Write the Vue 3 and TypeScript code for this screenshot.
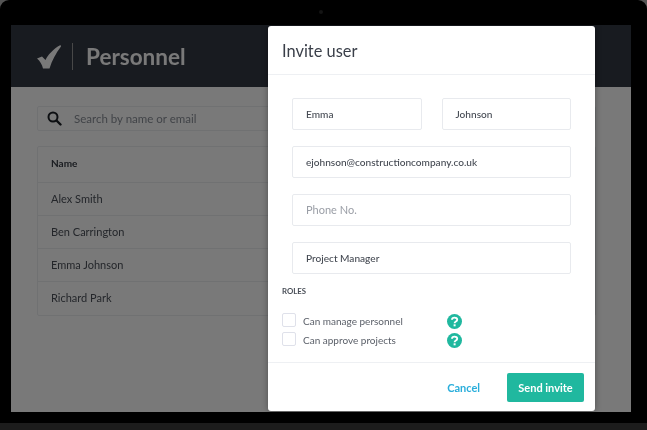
<script setup lang="ts">
const people: string[] = ['Alex Smith', 'Ben Carrington', 'Emma Johnson', 'Richard Park']
const roles: string[] = ['Can manage personnel', 'Can approve projects']
</script>

<template>
  <div class="device">
    <span class="camera"></span>
    <div class="screen">
      <header class="topbar">
        <svg class="logo" width="24" height="24" viewBox="0 0 24 24"><path d="M0 13.500 L5 11.500 L8.500 15 C11 10 16 4 23.500 0 L24 1.500 C19 8 15 15.500 12.500 23.500 L6 23.500 C5 19.500 3 16 0 13.500 Z" fill="#fff"/></svg>
        <span class="divider"></span>
        <span class="title">Personnel</span>
      </header>
      <main class="page">
        <div class="search">
          <svg width="15" height="15" viewBox="0 0 15 15" fill="none" stroke="#1c2026" stroke-width="2"><circle cx="6" cy="6" r="4.500"/><path d="M9.500 9.500 L13.500 13.500" stroke-linecap="round" stroke-width="2.400"/></svg>
          <span>Search by name or email</span>
        </div>
        <div class="table">
          <div class="thead">Name</div>
          <div v-for="p in people" :key="p" class="row">{{ p }}</div>
        </div>
      </main>
      <div class="scrim"></div>
      <section class="modal">
        <h2 class="modal-title">Invite user</h2>
        <div class="modal-body">
          <div class="fields">
            <div class="pair">
              <div class="field">Emma</div>
              <div class="field">Johnson</div>
            </div>
            <div class="field">ejohnson@constructioncompany.co.uk</div>
            <div class="field placeholder">Phone No.</div>
            <div class="field">Project Manager</div>
          </div>
          <div class="roles-label">ROLES</div>
          <div class="roles">
            <div v-for="r in roles" :key="r" class="role">
              <span class="check"></span>
              <span class="role-name">{{ r }}</span>
              <svg class="help" width="15" height="15" viewBox="0 0 15 15"><circle cx="7.500" cy="7.500" r="7.500" fill="#20b89f"/><path d="M5 5.800 C5 2.900 10.200 2.900 10.200 5.700 C10.200 7.600 7.600 7.500 7.600 9.200" fill="none" stroke="#fff" stroke-width="1.900"/><rect x="6.600" y="10.300" width="2" height="2" fill="#fff"/></svg>
            </div>
          </div>
        </div>
        <footer class="modal-foot">
          <span class="cancel">Cancel</span>
          <span class="send">Send invite</span>
        </footer>
      </section>
    </div>
    <div class="base"></div>
  </div>
</template>

<style>
html, body { margin: 0; background: #555; }
</style>

<style scoped>
.device {
  position: relative;
  width: 647px;
  height: 430px;
  background: #000;
  border-radius: 9px 9px 0 0;
  padding-top: 25px;
  box-sizing: border-box;
  overflow: hidden;
  display: flex;
  flex-direction: column;
  font-family: Lato, "Open Sans", sans-serif;
  filter: blur(0.45px);
}
.camera {
  position: absolute;
  left: 319px;
  top: 10px;
  width: 4px;
  height: 4px;
  border-radius: 50%;
  background: #141414;
}
.screen {
  position: relative;
  margin-left: 11px;
  width: 620px;
  height: 387px;
  flex: none;
  background: #fff;
  overflow: hidden;
}
.base { margin-top: 11px; flex: 1; background: #1c1c1c; }
.topbar {
  height: 62px;
  background: #343a45;
  display: flex;
  align-items: center;
  padding-left: 26px;
  box-sizing: border-box;
}
.logo { flex: none; margin-top: 2px; }
.divider { width: 1px; height: 27px; background: #999; margin: 0 13px 0 11px; }
.title { font-size: 22.500px; font-weight: 700; color: #fff; }
.page { padding: 19px 35px 0 26px; }
.search {
  height: 25px;
  border: 1px solid #eceef1;
  border-radius: 2px;
  box-sizing: border-box;
  display: flex;
  align-items: center;
  gap: 12px;
  padding-left: 9px;
  font-size: 11.500px;
  color: #8a8f98;
}
.table { margin-top: 15px; border: 1px solid #eceef1; border-radius: 2px; }
.thead {
  height: 36px;
  box-sizing: border-box;
  display: flex;
  align-items: center;
  padding: 0 0 3px 13px;
  font-size: 10px;
  font-weight: 700;
  color: #3b4049;
  border-bottom: 1px solid #eceef1;
}
.row {
  height: 33px;
  box-sizing: border-box;
  display: flex;
  align-items: center;
  padding: 0 0 2px 13px;
  font-size: 11px;
  color: #4c515a;
  border-bottom: 1px solid #eceef1;
}
.row:last-child { border-bottom: 0; }
.scrim { position: absolute; inset: 0; background: rgba(0, 0, 0, 0.525); }
.modal {
  position: absolute;
  left: 257px;
  top: 1px;
  width: 327px;
  height: 385px;
  background: #fff;
  border-radius: 3px;
  box-shadow: 0 0 6px rgba(0, 0, 0, 0.35);
  display: flex;
  flex-direction: column;
}
.modal-title {
  margin: 0;
  height: 49px;
  flex: none;
  box-sizing: border-box;
  border-bottom: 1px solid #eef0f3;
  padding: 15px 0 0 14px;
  font-size: 16.400px;
  line-height: 20px;
  font-weight: 400;
  color: #3a3f49;
}
.modal-body { flex: 1; padding: 23px 24px 0 14px; }
.fields { display: flex; flex-direction: column; gap: 16px; padding-left: 10px; }
.pair { display: flex; gap: 20px; }
.pair .field { flex: 1; }
.field {
  height: 32px;
  box-sizing: border-box;
  border: 1px solid #e8eaee;
  border-radius: 2px;
  padding: 0 0 1px 13px;
  display: flex;
  align-items: center;
  font-size: 10.100px;
  font-weight: 500;
  color: #444952;
}
.placeholder { color: #9a9ea6; font-size: 11px; font-weight: 400; }
.roles-label { margin-top: 12px; font-size: 7.800px; line-height: 10px; font-weight: 700; color: #4a4f58; }
.roles { margin-top: 17px; display: flex; flex-direction: column; gap: 5px; }
.role { display: flex; align-items: center; height: 14px; }
.check {
  width: 14px;
  height: 14px;
  box-sizing: border-box;
  border: 1px solid #dfe1ea;
  border-radius: 2px;
  flex: none;
}
.role-name { width: 144px; margin: 1px 0 0 7px; font-size: 10px; color: #5a5f68; }
.help { flex: none; margin-top: 2px; }
.modal-foot {
  height: 49px;
  flex: none;
  box-sizing: border-box;
  border-top: 1px solid #eef0f3;
  display: flex;
  align-items: center;
  justify-content: flex-end;
  padding-right: 11px;
}
.cancel { font-size: 11px; font-weight: 700; color: #2aaedb; margin-right: 27px; }
.send {
  width: 77px;
  height: 29px;
  background: #20b89f;
  border-radius: 2px;
  color: #fff;
  font-size: 11px;
  font-weight: 700;
  display: flex;
  align-items: center;
  justify-content: center;
}
</style>
